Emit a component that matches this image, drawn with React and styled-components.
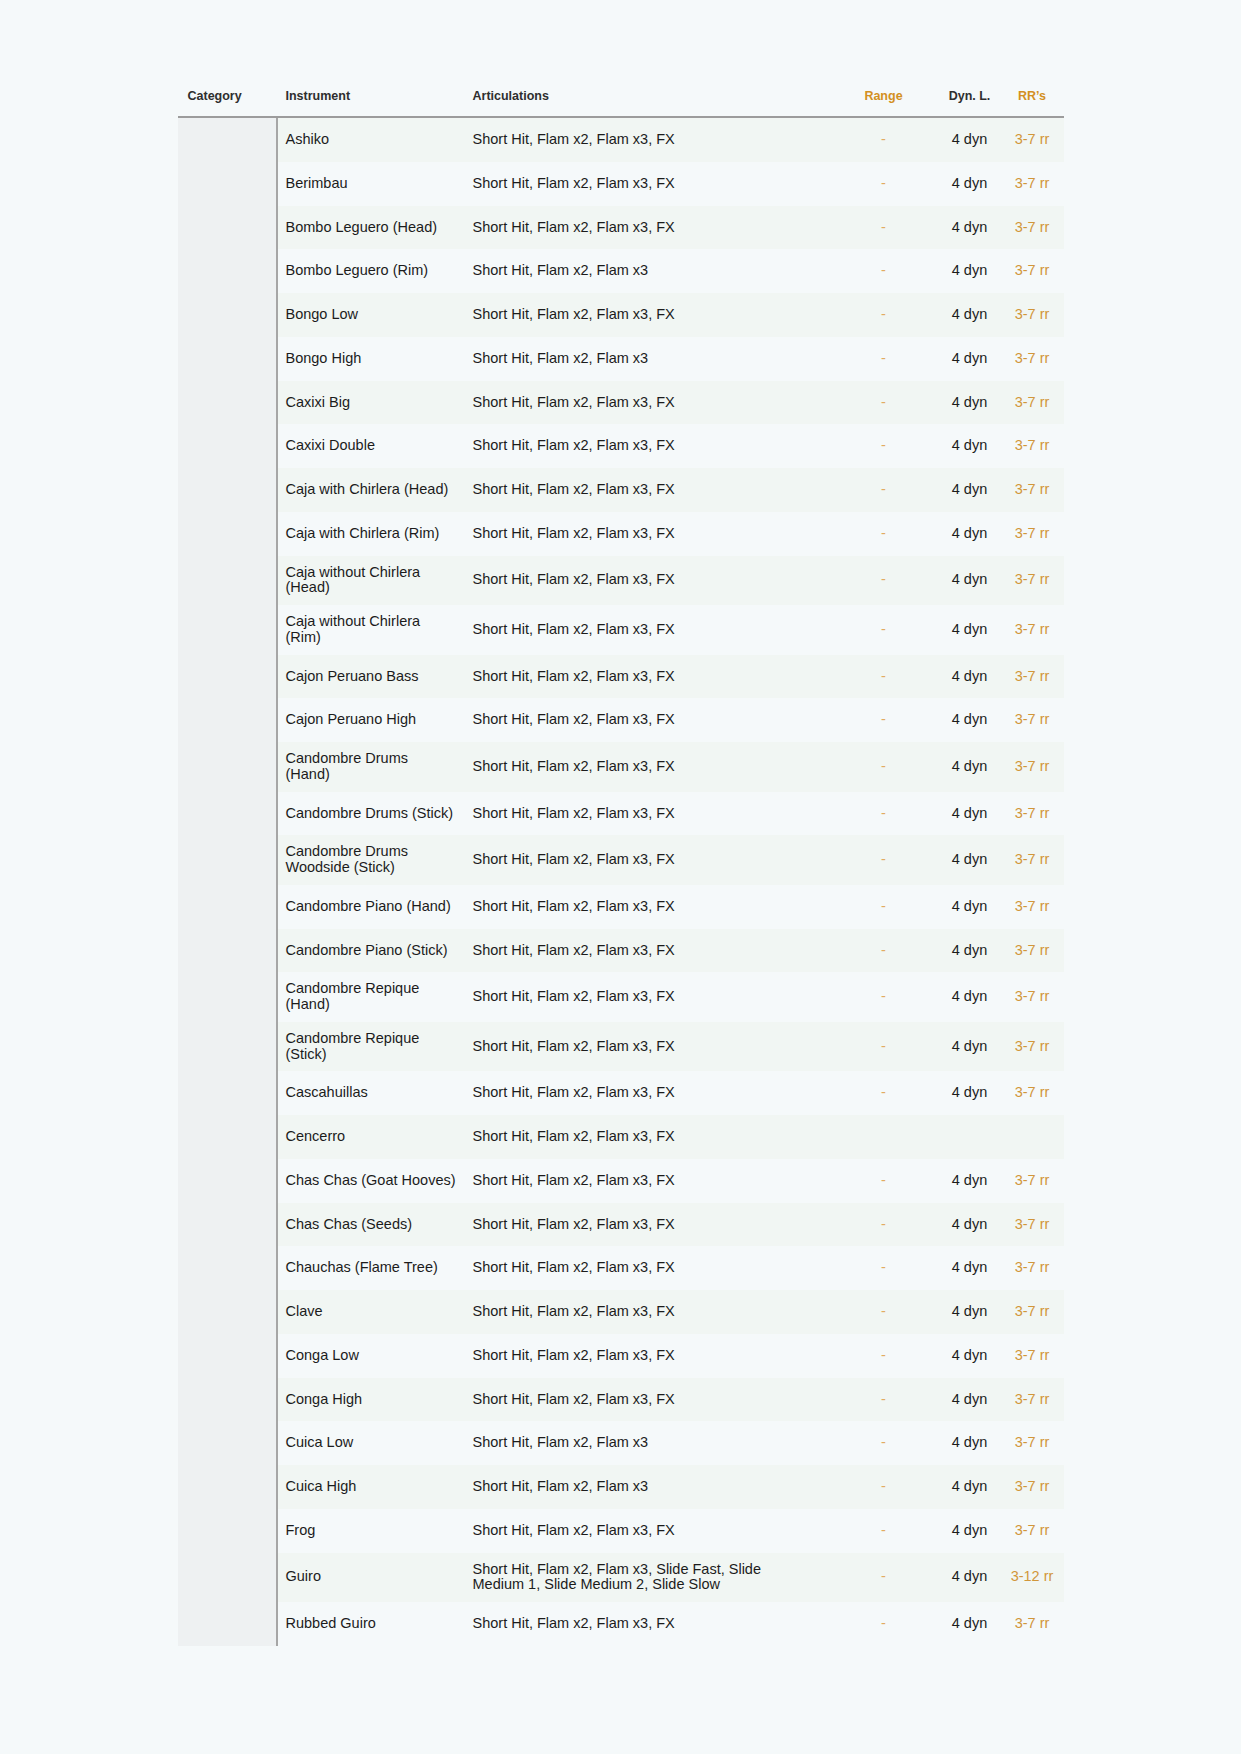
import styled, {createGlobalStyle} from "styled-components";

const GlobalStyle = createGlobalStyle`
	html, body {
		margin: 0;
		padding: 0;
		background-color: #f5f9fa;
	}

	body {
		font-family: "Liberation Sans", Arial, Helvetica, sans-serif;
		color: #1c1c1c;
		-webkit-font-smoothing: antialiased;
	}
`

const Page = styled.main`
	min-height: 1754px;
	padding-top: 75px;
	box-sizing: border-box;
	display: flex;
	justify-content: center;
	align-items: flex-start;
`

const Sheet = styled.section`
	width: 886px;
	font-size: 14.5px;
`

const HeaderRow = styled.div`
	display: grid;
	grid-template-columns: 100px 187px 388px 62px 86px 63px;
	height: 41px;
	align-items: center;
	border-bottom: 2px solid #9c9c9c;
	font-size: 12.5px;
	font-weight: 700;
	color: #2e2e2e;
`

const HeadLabel = styled.span`
	padding-left: ${props => props.$padLeft ?? 0}px;
	text-align: ${props => props.$center ? 'center' : 'left'};
	color: ${props => props.$accent ? '#d3901f' : 'inherit'};
	white-space: nowrap;
`

const Body = styled.div`
	display: flex;
`

const CategoryStrip = styled.div`
	width: 98px;
	flex-shrink: 0;
	background-color: #eef1f2;
	border-right: 2px solid #a6a6a6;
`

const Rows = styled.div`
	flex: 1;
	display: flex;
	flex-direction: column;
`

const Row = styled.div`
	display: grid;
	grid-template-columns: 187px 388px 62px 86px 63px;
	align-items: center;
	min-height: 43.75px;
	padding: 9px 0;
	box-sizing: border-box;
	line-height: 15.75px;
	background-color: ${props => props.$striped ? '#f1f6f3' : 'transparent'};
`

const InstrumentName = styled.div`
	width: 170.4px;
	padding-left: 8px;
`

const ArticulationList = styled.div`
	width: 310px;
	padding-left: 8px;
`

const Value = styled.span`
	text-align: center;
	white-space: nowrap;
	padding-left: ${props => props.$padLeft ?? 0}px;
	color: ${props => props.$tone === 'accent' ? '#d1963a' : props.$tone === 'soft' ? '#e2ab62' : '#1c1c1c'};
`

const SHORT_FX = 'Short Hit, Flam x2, Flam x3, FX'
const SHORT = 'Short Hit, Flam x2, Flam x3'

const instruments = [
	{name: 'Ashiko', arts: SHORT_FX},
	{name: 'Berimbau', arts: SHORT_FX},
	{name: 'Bombo Leguero (Head)', arts: SHORT_FX},
	{name: 'Bombo Leguero (Rim)', arts: SHORT},
	{name: 'Bongo Low', arts: SHORT_FX},
	{name: 'Bongo High', arts: SHORT},
	{name: 'Caxixi Big', arts: SHORT_FX},
	{name: 'Caxixi Double', arts: SHORT_FX},
	{name: 'Caja with Chirlera (Head)', arts: SHORT_FX},
	{name: 'Caja with Chirlera (Rim)', arts: SHORT_FX},
	{name: 'Caja without Chirlera (Head)', arts: SHORT_FX},
	{name: 'Caja without Chirlera (Rim)', arts: SHORT_FX},
	{name: 'Cajon Peruano Bass', arts: SHORT_FX},
	{name: 'Cajon Peruano High', arts: SHORT_FX},
	{name: 'Candombre Drums (Hand)', arts: SHORT_FX},
	{name: 'Candombre Drums (Stick)', arts: SHORT_FX},
	{name: 'Candombre Drums Woodside (Stick)', arts: SHORT_FX},
	{name: 'Candombre Piano (Hand)', arts: SHORT_FX},
	{name: 'Candombre Piano (Stick)', arts: SHORT_FX},
	{name: 'Candombre Repique (Hand)', arts: SHORT_FX},
	{name: 'Candombre Repique (Stick)', arts: SHORT_FX},
	{name: 'Cascahuillas', arts: SHORT_FX},
	{name: 'Cencerro', arts: SHORT_FX, empty: true},
	{name: 'Chas Chas (Goat Hooves)', arts: SHORT_FX},
	{name: 'Chas Chas (Seeds)', arts: SHORT_FX},
	{name: 'Chauchas (Flame Tree)', arts: SHORT_FX},
	{name: 'Clave', arts: SHORT_FX},
	{name: 'Conga Low', arts: SHORT_FX},
	{name: 'Conga High', arts: SHORT_FX},
	{name: 'Cuica Low', arts: SHORT},
	{name: 'Cuica High', arts: SHORT},
	{name: 'Frog', arts: SHORT_FX},
	{name: 'Guiro', arts: 'Short Hit, Flam x2, Flam x3, Slide Fast, Slide Medium 1, Slide Medium 2, Slide Slow', rr: '3-12 rr'},
	{name: 'Rubbed Guiro', arts: SHORT_FX},
]

export default function App() {
	return (
		<>
			<GlobalStyle />
			<Page>
				<Sheet>
					<HeaderRow>
						<HeadLabel $padLeft={10}>Category</HeadLabel>
						<HeadLabel $padLeft={8}>Instrument</HeadLabel>
						<HeadLabel $padLeft={8}>Articulations</HeadLabel>
						<HeadLabel $accent $center>Range</HeadLabel>
						<HeadLabel $center $padLeft={24}>Dyn. L.</HeadLabel>
						<HeadLabel $accent $center>RR’s</HeadLabel>
					</HeaderRow>
					<Body>
						<CategoryStrip />
						<Rows>
							{instruments.map((item, index) => (
								<Row key={item.name} $striped={index % 2 === 0}>
									<InstrumentName>{item.name}</InstrumentName>
									<ArticulationList>{item.arts}</ArticulationList>
									<Value $tone="soft">{item.empty ? '' : '-'}</Value>
									<Value $padLeft={24}>{item.empty ? '' : '4 dyn'}</Value>
									<Value $tone="accent">{item.empty ? '' : (item.rr || '3-7 rr')}</Value>
								</Row>
							))}
						</Rows>
					</Body>
				</Sheet>
			</Page>
		</>
	)
}
